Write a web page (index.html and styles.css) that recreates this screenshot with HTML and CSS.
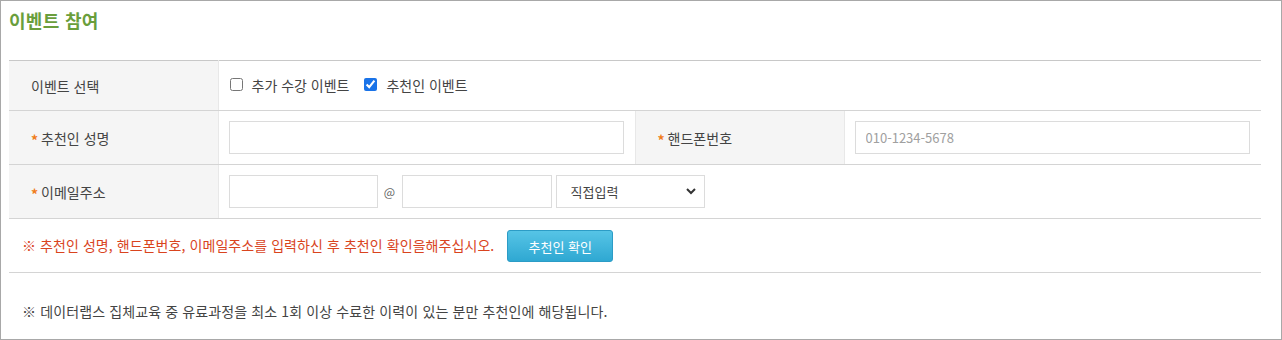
FILE: index.html
```html
<!DOCTYPE html>
<html lang="ko">
<head>
    <meta charset="UTF-8">
    <meta name="viewport" content="width=device-width, initial-scale=1.0">
    <title>이벤트 참여</title>
    <link rel="stylesheet" href="styles.css">
</head>
<body>
    <div class="wrap">
        <h2 class="title">이벤트 참여</h2>
        <table class="form-table">
            <colgroup>
                <col class="c-label">
                <col class="c-value">
                <col class="c-label2">
                <col class="c-value">
            </colgroup>
            <tr class="row-event">
                <th>이벤트 선택</th>
                <td colspan="3">
                    <label class="check"><input type="checkbox"> 추가 수강 이벤트</label>
                    <label class="check"><input type="checkbox" checked> 추천인 이벤트</label>
                </td>
            </tr>
            <tr>
                <th><span class="star">*</span>추천인 성명</th>
                <td><input type="text" class="input wide"></td>
                <th class="th2"><span class="star">*</span>핸드폰번호</th>
                <td><input type="text" class="input wide" placeholder="010-1234-5678"></td>
            </tr>
            <tr>
                <th><span class="star">*</span>이메일주소</th>
                <td colspan="3">
                    <div class="email">
                        <input type="text" class="input mail1">
                        <span class="at">@</span>
                        <input type="text" class="input mail2">
                        <select class="input domain">
                            <option>직접입력</option>
                        </select>
                    </div>
                </td>
            </tr>
            <tr class="row-notice">
                <td colspan="4">
                    <span class="notice">※ 추천인 성명, 핸드폰번호, 이메일주소를 입력하신 후 추천인 확인을해주십시오.</span>
                    <a href="#" class="button">추천인 확인</a>
                </td>
            </tr>
        </table>
        <p class="info">※ 데이터랩스 집체교육 중 유료과정을 최소 1회 이상 수료한 이력이 있는 분만 추천인에 해당됩니다.</p>
    </div>
</body>
</html>
```

FILE: styles.css
```css
body {
    margin: 0;
    padding: 0;
    font-family: "Noto Sans CJK KR", "Noto Sans", sans-serif;
    background-color: #fff;
    color: #444;
}
.wrap {
    box-sizing: border-box;
    width: 1282px;
    height: 340px;
    border: 1px solid #a8a8a8;
    padding: 0 20px 0 8px;
}
.title {
    margin: 0;
    height: 59px;
    padding-top: 5px;
    box-sizing: border-box;
    font-size: 18px;
    font-weight: bold;
    color: #6a9e3c;
    line-height: 28px;
    letter-spacing: 0.3px;
}
.form-table {
    width: 1252px;
    border-collapse: collapse;
    table-layout: fixed;
    border-top: 1px solid #c8c8c8;
    font-size: 14px;
}
.c-label {
    width: 209px;
}
.c-label2 {
    width: 209px;
}
.c-value {
    width: 417px;
}
.form-table th {
    background-color: #f5f5f5;
    text-align: left;
    font-weight: normal;
    color: #444;
    padding: 0 0 0 22px;
    height: 53px;
    border-bottom: 1px solid #d4d4d4;
    border-right: 1px solid #e8e8e8;
}
.form-table td {
    height: 53px;
    padding: 0 0 0 10px;
    border-bottom: 1px solid #d4d4d4;
}
.form-table .th2 {
    border-left: 1px solid #e8e8e8;
}
.row-event th,
.row-event td {
    height: 49px;
}
.star {
    color: #f07c1a;
    font-weight: bold;
    margin-right: 3px;
    font-size: 14px;
    position: relative;
    top: 2px;
}
.check {
    display: inline-flex;
    align-items: center;
    margin-right: 10px;
    color: #444;
    vertical-align: middle;
    position: relative;
    top: -2px;
}
.check input {
    width: 13px;
    height: 13px;
    margin: 0 9px 0 1px;
    accent-color: #1a73e8;
}
.input {
    box-sizing: border-box;
    height: 33px;
    border: 1px solid #dcdcdc;
    background: #fff;
    font-family: "Noto Sans CJK KR", "Noto Sans", sans-serif;
    font-size: 13px;
    padding: 0 10px;
    color: #444;
    vertical-align: middle;
}
.input::placeholder {
    color: #a0a0a0;
}
.wide {
    width: 395px;
}
.email {
    display: flex;
    align-items: center;
}
.mail1 {
    width: 149px;
}
.mail2 {
    width: 150px;
}
.at {
    width: 24px;
    text-align: center;
    font-size: 12px;
    color: #666;
}
.domain {
    width: 149px;
    margin-left: 4px;
    padding-left: 14px;
    appearance: none;
    background: #fff url("data:image/svg+xml;utf8,<svg xmlns='http://www.w3.org/2000/svg' width='10' height='7'><path d='M1 1l4 4 4-4' fill='none' stroke='%23333' stroke-width='2'/></svg>") no-repeat right 8px center;
}
.row-notice td {
    padding-left: 13px;
}
.notice {
    color: #d9441e;
    font-size: 14px;
    letter-spacing: 0.07px;
    vertical-align: middle;
    position: relative;
    top: -1px;
}
.button {
    display: inline-block;
    vertical-align: middle;
    margin-left: 9px;
    width: 106px;
    height: 32px;
    line-height: 31px;
    text-align: center;
    color: white;
    font-size: 13px;
    text-decoration: none;
    border-radius: 3px;
    border: 1px solid #2c9cc6;
    box-sizing: border-box;
    background: linear-gradient(#56c4e6, #2fa8d2);
}
.info {
    margin: 28px 0 0 13px;
    font-size: 14px;
    letter-spacing: 0.12px;
    color: #444;
}
```
